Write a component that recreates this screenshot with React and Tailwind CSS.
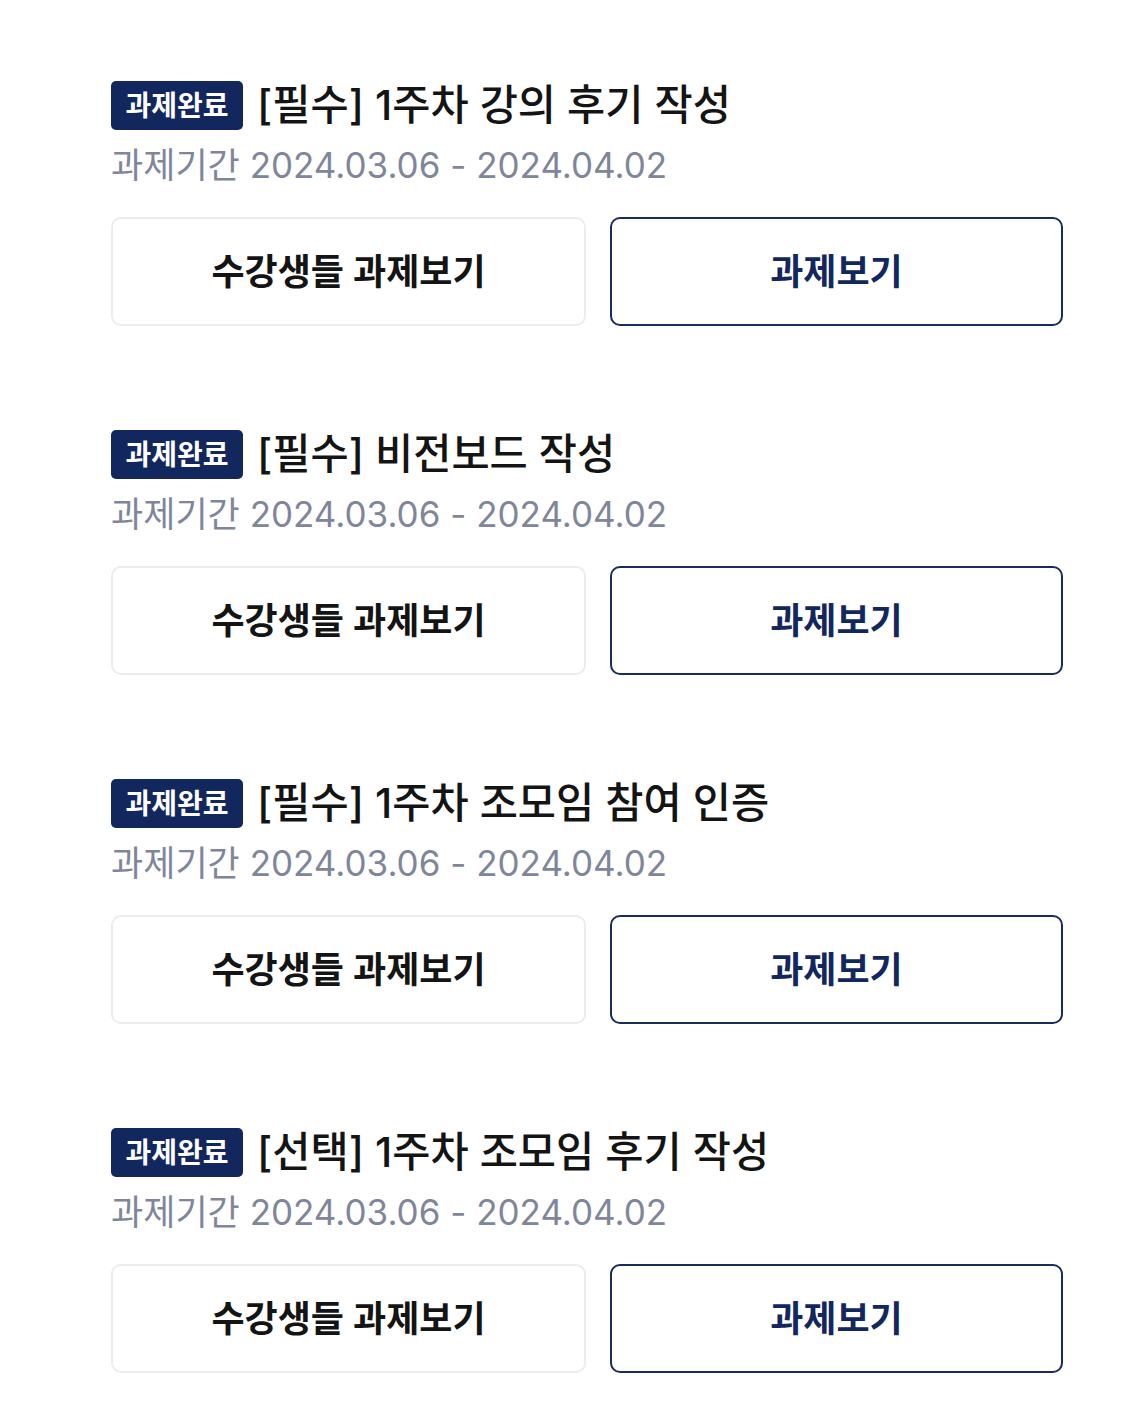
import React from "react";

const items = [
  "[필수] 1주차 강의 후기 작성",
  "[필수] 비전보드 작성",
  "[필수] 1주차 조모임 참여 인증",
  "[선택] 1주차 조모임 후기 작성",
];

export default function App() {
  return (
    <div
      className="min-h-[1428px] w-[1140px] bg-white pl-[111px] pt-[81px]"
      style={{ fontFamily: 'Inter, "Noto Sans CJK KR", sans-serif' }}
    >
      <div className="flex w-[952px] flex-col gap-[104px]">
        {items.map((t) => (
          <div key={t} className="flex flex-col">
            <div className="flex h-[49px] items-center gap-[14px]">
              <span className="flex h-[49px] w-[132px] items-center justify-center rounded-[5px] bg-[#13275f] text-[28px] font-bold text-white">
                과제완료
              </span>
              <span className="text-[41.5px] font-medium leading-none text-[#141414]">
                {t}
              </span>
            </div>
            <div className="mt-[11px] h-[48px] text-[35px] leading-[48px] text-[#80869a]">
              과제기간 2024.03.06 - 2024.04.02
            </div>
            <div className="mt-[28px] flex gap-[24px]">
              <button className="flex h-[109px] w-[475px] items-center justify-center rounded-[10px] border-2 border-[#ececec] bg-white text-[36px] font-semibold text-[#141414]">
                수강생들 과제보기
              </button>
              <button className="flex h-[109px] flex-1 items-center justify-center rounded-[10px] border-2 border-[#1a2b5c] bg-white text-[36px] font-semibold text-[#13275f]">
                과제보기
              </button>
            </div>
          </div>
        ))}
      </div>
    </div>
  );
}
